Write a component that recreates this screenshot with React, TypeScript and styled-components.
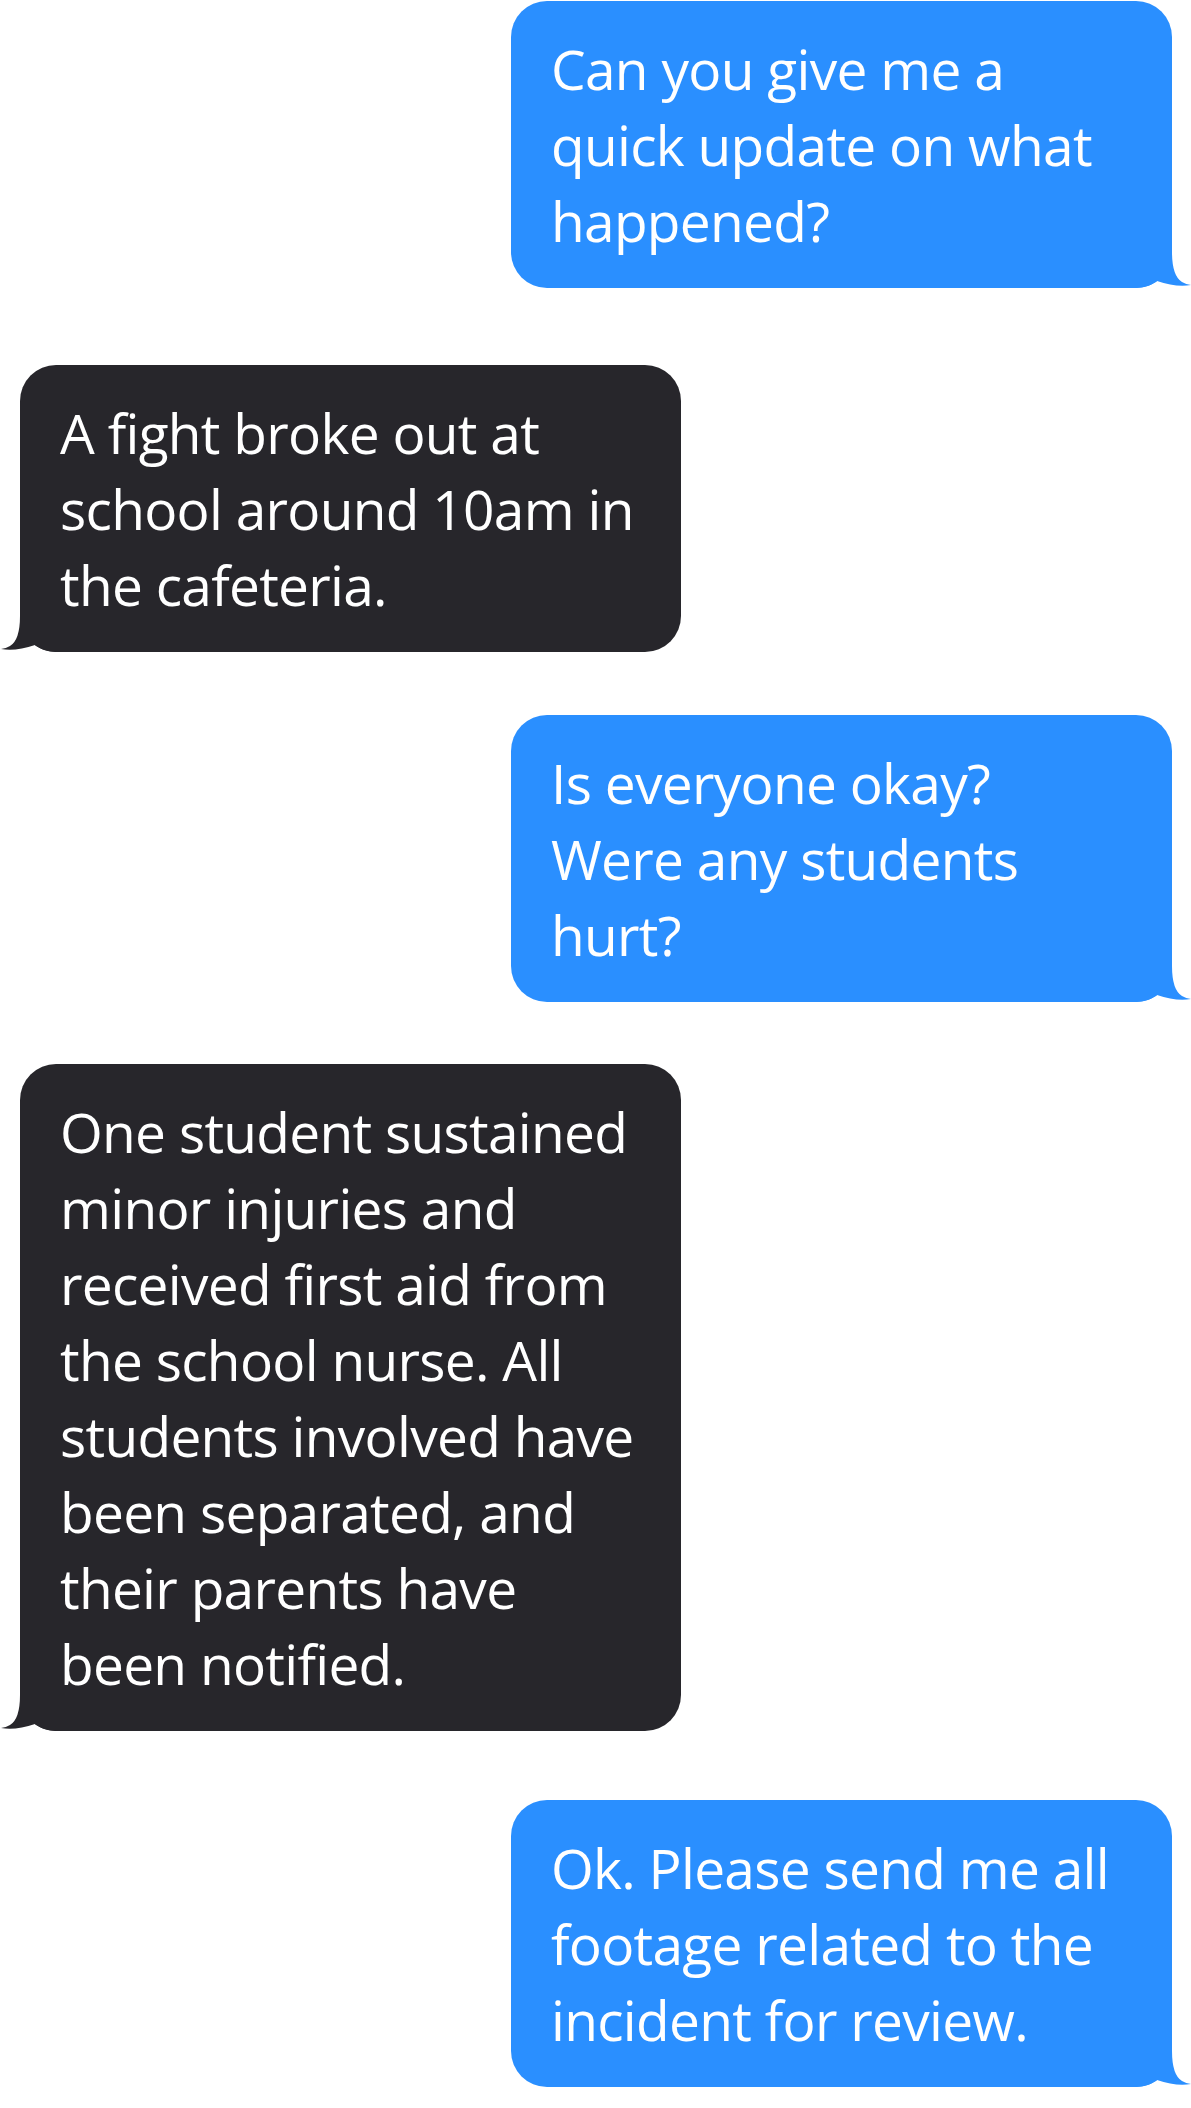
import React from "react";
import styled, { createGlobalStyle } from "styled-components";

type Side = "me" | "them";

const GlobalStyle = createGlobalStyle`
  html, body {
    margin: 0;
    padding: 0;
    background: #ffffff;
  }
`;

const Thread = styled.div`
  width: 1191px;
  box-sizing: border-box;
  padding: 1px 19px 20px 20px;
  display: flex;
  flex-direction: column;
  font-family: "Open Sans", "Noto Sans", sans-serif;
`;

const Row = styled.div<{ $from: Side; $space: number }>`
  display: flex;
  justify-content: ${(p) => (p.$from === "me" ? "flex-end" : "flex-start")};
  margin-top: ${(p) => p.$space}px;
`;

const Bubble = styled.div<{ $from: Side }>`
  position: relative;
  width: 661px;
  box-sizing: border-box;
  padding: 29.5px 40px;
  border-radius: 36px;
  background: ${(p) => (p.$from === "me" ? "#2A8FFF" : "#27262B")};
  color: ${(p) => (p.$from === "me" ? "#2A8FFF" : "#27262B")};
`;

const Text = styled.p`
  margin: 0;
  color: #ffffff;
  font-size: 55px;
  line-height: 76px;
  font-weight: 400;
  letter-spacing: -0.7px;
`;

const Line = styled.span`
  display: block;
  white-space: nowrap;
`;

const TailSvg = styled.svg<{ $from: Side }>`
  position: absolute;
  bottom: 0;
  width: 59px;
  height: 40px;
  ${(p) =>
    p.$from === "me"
      ? "right: -19px;"
      : "left: -19px; transform: scaleX(-1);"}
`;

const Tail = ({ from }: { from: Side }) => (
  <TailSvg $from={from} viewBox="-40 -40 59 40" aria-hidden="true">
    <path
      fill="currentColor"
      d="M-40 0 L-40 -40 L0 -40 L0 -36 Q0 -12 10 -6 Q14 -3.5 19 -3 Q4 -0.5 -15 -7 Q-24 0 -36 0 L-40 0 Z"
    />
  </TailSvg>
);

const messages: { from: Side; space: number; lines: string[] }[] = [
  {
    from: "me",
    space: 0,
    lines: ["Can you give me a", "quick update on what", "happened?"],
  },
  {
    from: "them",
    space: 77,
    lines: ["A fight broke out at", "school around 10am in", "the cafeteria."],
  },
  {
    from: "me",
    space: 63,
    lines: ["Is everyone okay?", "Were any students", "hurt?"],
  },
  {
    from: "them",
    space: 62,
    lines: [
      "One student sustained",
      "minor injuries and",
      "received first aid from",
      "the school nurse. All",
      "students involved have",
      "been separated, and",
      "their parents have",
      "been notified.",
    ],
  },
  {
    from: "me",
    space: 69,
    lines: ["Ok. Please send me all", "footage related to the", "incident for review."],
  },
];

export default function App() {
  return (
    <>
      <GlobalStyle />
      <Thread>
        {messages.map((m, i) => (
          <Row key={i} $from={m.from} $space={m.space}>
            <Bubble $from={m.from}>
              <Text>
                {m.lines.map((l, j) => (
                  <Line key={j}>{l}</Line>
                ))}
              </Text>
              <Tail from={m.from} />
            </Bubble>
          </Row>
        ))}
      </Thread>
    </>
  );
}
